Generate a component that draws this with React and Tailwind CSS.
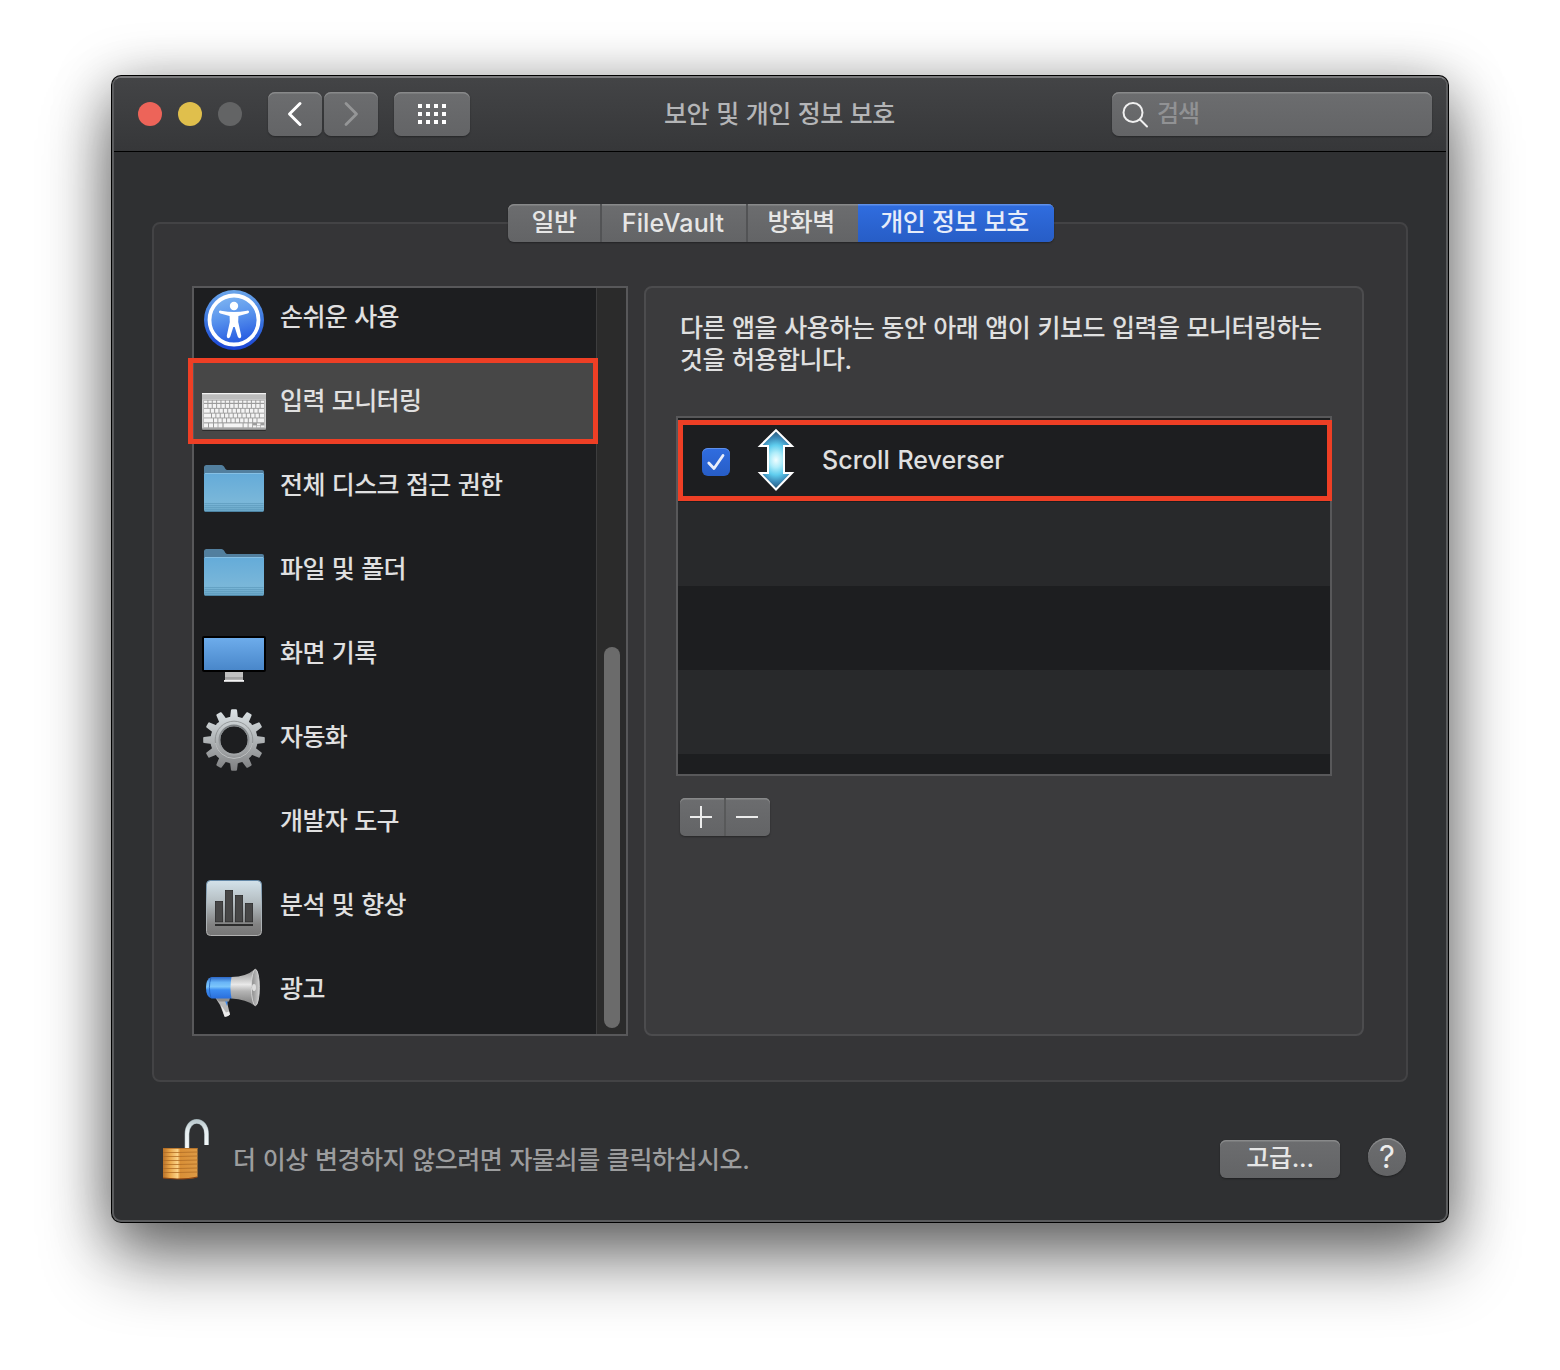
import React from "react";

const KO = "font-['Inter','Noto_Sans_CJK_KR',sans-serif] text-[25px] font-medium whitespace-nowrap [word-spacing:0.9px]";
const BTN = "bg-linear-to-b from-[#6c6d6f] to-[#636466] shadow-[inset_0_1.5px_0_#88898a,0_1px_2px_rgba(0,0,0,0.35)]";

function AccessibilityIcon() {
  return (
    <svg width="64" height="64" viewBox="0 0 64 64">
      <defs>
        <linearGradient id="acc" x1="0" y1="0" x2="0.25" y2="1">
          <stop offset="0" stopColor="#86bbf2" />
          <stop offset="0.5" stopColor="#5a95ed" />
          <stop offset="1" stopColor="#2a5fe2" />
        </linearGradient>
        <linearGradient id="accRim" x1="0" y1="0" x2="0" y2="1">
          <stop offset="0" stopColor="#6ba6ea" />
          <stop offset="0.5" stopColor="#3b76df" />
          <stop offset="1" stopColor="#1a44d4" />
        </linearGradient>
      </defs>
      <circle cx="32" cy="32" r="30" fill="url(#accRim)" />
      <circle cx="32" cy="32" r="24.5" fill="url(#acc)" stroke="#fff" strokeWidth="3.8" />
      <circle cx="32" cy="18" r="4.2" fill="#fff" />
      <path
        d="M17 23.2 Q16.6 25 18.4 25.4 L27.6 28 L27.8 34 L24.8 47.6 Q24.5 50 26 50.2 Q27.6 50.4 28.3 48.6 L31.3 39 H32.7 L35.7 48.6 Q36.4 50.4 38 50.2 Q39.5 50 39.2 47.6 L36.2 34 L36.4 28 L45.6 25.4 Q47.4 25 47 23.2 Q46.4 22.4 45 22.7 Q38 24 32 24 Q26 24 19 22.7 Q17.6 22.4 17 23.2Z"
        fill="#fff"
      />
    </svg>
  );
}

function KeyboardIcon() {
  const rows = [28.6, 32, 36.8, 41.6, 46.4, 51.4];
  return (
    <svg width="64" height="64" viewBox="0 0 64 64">
      <rect x="0" y="22" width="64" height="37" rx="1" fill="#2c2c2c" />
      <rect x="0" y="21" width="64" height="36.6" rx="1" fill="#d0d0d0" />
      <rect x="0" y="21" width="64" height="1.4" fill="#f2f2f2" />
      <rect x="0" y="22.4" width="64" height="5" fill="#bcbcbc" />
      <rect x="0" y="55.8" width="64" height="1.6" fill="#a4a4a4" />
      <rect x="1.6" y="28" width="60.8" height="27.8" fill="#9c9c9c" />
      {rows.map((y, r) => {
        const h = r === 0 ? 2.2 : 3.9;
        if (r === 5) {
          return (
            <g key={r} fill="#f4f4f4">
              <rect x="2" y={y} width="4" height={h} />
              <rect x="7" y={y} width="4" height={h} />
              <rect x="12" y={y} width="3.6" height={h} />
              <rect x="16.4" y={y} width="4" height={h} />
              <rect x="21.6" y={y} width="19" height={h} />
              <rect x="41.6" y={y} width="4" height={h} />
              <rect x="46.6" y={y} width="3.6" height={h} />
              <rect x="51" y={y + 2} width="3.4" height="2" />
              <rect x="55" y={y} width="3.4" height="1.8" />
              <rect x="55" y={y + 2.2} width="3.4" height="1.8" />
              <rect x="59" y={y + 2} width="3.4" height="2" />
            </g>
          );
        }
        const lead = [3.4, 3.4, 5.8, 7, 9][r];
        const count = [12, 12, 11, 11, 10][r];
        return (
          <g key={r} fill="#f4f4f4">
            <rect x="2" y={y} width={lead} height={h} />
            {Array.from({ length: count }).map((_, i) => (
              <rect key={i} x={2 + lead + 1 + i * 4.35} y={y} width="3.35" height={h} />
            ))}
            <rect
              x={2 + lead + 1 + count * 4.35}
              y={y}
              width={62 - (2 + lead + 1 + count * 4.35)}
              height={h}
            />
          </g>
        );
      })}
    </svg>
  );
}

function FolderIcon() {
  return (
    <svg width="64" height="64" viewBox="0 0 64 64">
      <defs>
        <linearGradient id="fold" x1="0" y1="0" x2="0" y2="1">
          <stop offset="0" stopColor="#64abd9" />
          <stop offset="0.75" stopColor="#7ab7d9" />
          <stop offset="1" stopColor="#69a6c6" />
        </linearGradient>
      </defs>
      <path d="M2 11.5 Q2 9 4.5 9 H19.5 Q21 9 22 10.5 L23.5 13 Q24.2 14 25.5 14 H60 Q62 14 62 16 V30 H2Z" fill="#527f9e" />
      <path d="M2 18.5 Q2 17 3.5 17 H60.5 Q62 17 62 18.5 V54 Q62 56 60 56 H4 Q2 56 2 54Z" fill="url(#fold)" />
      <rect x="3" y="17" width="58" height="0.8" fill="#8fc6e6" />
      <path d="M2.5 47.5H61.5M2.5 49.5H61.5M2.5 51.5H61.5M2.5 53.5H61.5" stroke="#5f9dbf" strokeWidth="0.8" />
      <path d="M3 55.5H61" stroke="#4c83a2" strokeWidth="1" />
    </svg>
  );
}

function MonitorIcon() {
  return (
    <svg width="64" height="64" viewBox="0 0 64 64">
      <defs>
        <linearGradient id="scr" x1="0" y1="0" x2="0" y2="1">
          <stop offset="0" stopColor="#6daceb" />
          <stop offset="1" stopColor="#4987ca" />
        </linearGradient>
      </defs>
      <rect x="23" y="47" width="18" height="9" fill="#c0c0c0" />
      <rect x="23" y="53" width="18" height="2.5" fill="#a2a2a2" />
      <rect x="22" y="56" width="20" height="1.8" fill="#f4f4f4" />
      <rect x="0" y="12" width="64" height="36" rx="2" fill="#000" />
      <rect x="2" y="14" width="60" height="32" fill="url(#scr)" />
    </svg>
  );
}

function GearIcon() {
  return (
    <svg width="64" height="64" viewBox="0 0 64 64">
      <defs>
        <linearGradient id="gear" gradientUnits="userSpaceOnUse" x1="0" y1="1" x2="0" y2="63">
          <stop offset="0" stopColor="#dce3e6" />
          <stop offset="0.5" stopColor="#b0b4b6" />
          <stop offset="1" stopColor="#7d7e80" />
        </linearGradient>
        <linearGradient id="gearRing" x1="0" y1="0" x2="0" y2="1">
          <stop offset="0" stopColor="#7c8184" />
          <stop offset="1" stopColor="#a3a6a8" />
        </linearGradient>
        <mask id="teeth">
          <rect width="64" height="64" fill="#000" />
          {Array.from({ length: 12 }).map((_, i) => (
            <path key={i} d="M27.8 12 L29 2 Q29.2 1.2 30 1.2 H34 Q34.8 1.2 35 2 L36.2 12Z" fill="#fff" transform={`rotate(${i * 30} 32 32)`} />
          ))}
          <circle cx="32" cy="32" r="23.6" fill="#fff" />
          <circle cx="32" cy="32" r="13.8" fill="#000" />
        </mask>
      </defs>
      <rect width="64" height="64" fill="url(#gear)" mask="url(#teeth)" />
      <circle cx="32" cy="32" r="18.8" fill="none" stroke="#888b8d" strokeWidth="0.8" />
      <circle cx="32" cy="32" r="14.6" fill="none" stroke="url(#gearRing)" strokeWidth="1.8" />
      <path d="M13.5 35 A18.8 18.8 0 0 0 50.5 35" fill="none" stroke="#c3c5c6" strokeWidth="0.9" />
    </svg>
  );
}

function ChartIcon() {
  return (
    <svg width="64" height="64" viewBox="0 0 64 64">
      <defs>
        <linearGradient id="chart" x1="0" y1="0" x2="0" y2="1">
          <stop offset="0" stopColor="#d3e2ea" />
          <stop offset="0.4" stopColor="#b4bdc1" />
          <stop offset="0.8" stopColor="#828282" />
          <stop offset="1" stopColor="#767676" />
        </linearGradient>
        <linearGradient id="chartEdge" x1="0" y1="0" x2="0" y2="1">
          <stop offset="0" stopColor="#6489a8" />
          <stop offset="0.4" stopColor="#a5b4bd" />
          <stop offset="1" stopColor="#b0b0b0" />
        </linearGradient>
      </defs>
      <rect x="4.5" y="4.5" width="55" height="55" rx="4" fill="url(#chart)" stroke="url(#chartEdge)" />
      <g fill="#474747" stroke="#2c2c2c" strokeWidth="0.8">
        <rect x="13.4" y="25.4" width="7.2" height="20.4" />
        <rect x="23.4" y="14.4" width="7.2" height="31.4" />
        <rect x="33.4" y="19.4" width="7.2" height="26.4" />
        <rect x="43.4" y="27.4" width="7.2" height="18.4" />
      </g>
      <rect x="13" y="48" width="38" height="2" fill="#2c2c2c" />
    </svg>
  );
}

function MegaphoneIcon() {
  return (
    <svg width="64" height="64" viewBox="0 0 64 64">
      <defs>
        <linearGradient id="mBlue" x1="0" y1="0" x2="0" y2="1">
          <stop offset="0" stopColor="#2c68c9" />
          <stop offset="0.25" stopColor="#69b5f7" />
          <stop offset="0.45" stopColor="#7cc6fb" />
          <stop offset="0.6" stopColor="#3c8df2" />
          <stop offset="1" stopColor="#2a6edb" />
        </linearGradient>
        <linearGradient id="mHorn" x1="0" y1="0" x2="0" y2="1">
          <stop offset="0" stopColor="#8a8a8a" />
          <stop offset="0.42" stopColor="#e9e9e9" />
          <stop offset="0.6" stopColor="#b4b4b4" />
          <stop offset="1" stopColor="#7a7a7a" />
        </linearGradient>
        <linearGradient id="mBell" x1="0" y1="0" x2="1" y2="0">
          <stop offset="0" stopColor="#8a8a8a" />
          <stop offset="1" stopColor="#cfcfcf" />
        </linearGradient>
      </defs>
      <path d="M13 37 L24 38 L28 54.5 Q26 57 22.5 56.6 L18 45Z" fill="#b9b9b9" />
      <path d="M19 45 L24 52.5 L27 51.5 L28 54.5 Q26 57 22.5 56.6Z" fill="#ececec" />
      <path d="M22 38.5 L26 38.5 L25 46Z" fill="#3c8df2" />
      <path d="M14 38 H28 L27 41.5 H17Z" fill="#8e8e8e" />
      <path d="M9.5 17 H30 V38.5 H9.5 Q4 37 4 28 Q4 18.5 9.5 17Z" fill="url(#mBlue)" />
      <path d="M9 17.5 Q5.8 27.5 9 38" fill="none" stroke="#1f5fb9" strokeWidth="0.8" />
      <path d="M29.5 17 Q44 17 53 9 V46 Q44 39 29.5 38.5 Q27.5 28 29.5 17Z" fill="url(#mHorn)" />
      <ellipse cx="53.4" cy="27.5" rx="4" ry="18.2" fill="url(#mBell)" stroke="#dedede" strokeWidth="0.8" />
      <ellipse cx="52" cy="27.5" rx="2" ry="3.4" fill="#dedede" />
    </svg>
  );
}

function ArrowIcon() {
  return (
    <svg width="38" height="64" viewBox="0 0 38 64">
      <defs>
        <radialGradient id="arrow" gradientUnits="userSpaceOnUse" cx="0" cy="0" r="30" gradientTransform="translate(19 32) scale(0.8 1)">
          <stop offset="0" stopColor="#f0fdff" />
          <stop offset="0.25" stopColor="#b0edfa" />
          <stop offset="0.5" stopColor="#5fcdee" />
          <stop offset="0.75" stopColor="#3a86b4" />
          <stop offset="1" stopColor="#2b4f69" />
        </radialGradient>
      </defs>
      <path d="M19 2.2 L35 18 H27 V45 H35 L19 61.5 L3 45 H11 V18 H3Z" fill="url(#arrow)" stroke="#fff" strokeWidth="2" />
    </svg>
  );
}

function LockIcon() {
  return (
    <svg width="50" height="64" viewBox="0 0 50 64" className="-mt-px">
      <defs>
        <linearGradient id="brass" x1="0" y1="0" x2="1" y2="0">
          <stop offset="0" stopColor="#b9722a" />
          <stop offset="0.2" stopColor="#e9a548" />
          <stop offset="0.42" stopColor="#fbd287" />
          <stop offset="0.5" stopColor="#d98f36" />
          <stop offset="1" stopColor="#dd9a45" />
        </linearGradient>
        <linearGradient id="steel" gradientUnits="userSpaceOnUse" x1="0" y1="2" x2="0" y2="32">
          <stop offset="0" stopColor="#b4c3c8" />
          <stop offset="0.4" stopColor="#e6eef0" />
          <stop offset="1" stopColor="#f6fafb" />
        </linearGradient>
      </defs>
      <path d="M27 32 V17 C27 0.2 46.5 0.2 46.5 17 V28" fill="none" stroke="#8b999e" strokeWidth="4.8" />
      <path d="M27 32 V17 C27 0.2 46.5 0.2 46.5 17 V28" fill="none" stroke="url(#steel)" strokeWidth="3.7" />
      <path d="M3 31 H37.5 V60 Q30 62.5 17 62 L3 61Z" fill="url(#brass)" />
      <path d="M3 31.5H37.5M3 35.5H18L37.5 35M3 39.5H18L37.5 39M3 43.5H18L37.5 43M3 47.5H18L37.5 47M3 51.5H18L37.5 51M3 55.5H18L37.5 55" fill="none" stroke="#b06c24" strokeWidth="0.8" />
      <path d="M3 61 L17 62 Q30 62 37.5 60" fill="none" stroke="#8a4412" strokeWidth="1.2" />
    </svg>
  );
}

const ITEMS = [
  { label: "손쉬운 사용", Icon: AccessibilityIcon },
  { label: "입력 모니터링", Icon: KeyboardIcon, selected: true },
  { label: "전체 디스크 접근 권한", Icon: FolderIcon },
  { label: "파일 및 폴더", Icon: FolderIcon },
  { label: "화면 기록", Icon: MonitorIcon },
  { label: "자동화", Icon: GearIcon },
  { label: "개발자 도구" },
  { label: "분석 및 향상", Icon: ChartIcon },
  { label: "광고", Icon: MegaphoneIcon },
];

function TitleBar() {
  return (
    <header className="flex h-[74px] shrink-0 items-start border-b border-black bg-linear-to-b from-[#434446] to-[#363739] pt-[14px] pr-[14px] pl-6">
      <div className="flex h-11 items-center gap-4">
        <span className="size-6 rounded-full bg-[#ed6459]" />
        <span className="size-6 rounded-full bg-[#e0bf4c]" />
        <span className="size-6 rounded-full bg-[#636465]" />
      </div>
      <div className="ml-[26px] flex gap-[2px]">
        <div className={`flex h-11 w-[54px] items-center justify-center rounded-[7px] ${BTN}`}>
          <svg width="16" height="26" viewBox="0 0 16 26" fill="none" stroke="#fff" strokeWidth="3" strokeLinecap="round" strokeLinejoin="round">
            <path d="M13 2.5 L2.5 13 L13 23.5" />
          </svg>
        </div>
        <div className={`flex h-11 w-[54px] items-center justify-center rounded-[7px] ${BTN}`}>
          <svg width="16" height="26" viewBox="0 0 16 26" fill="none" stroke="#959697" strokeWidth="2.8" strokeLinecap="round" strokeLinejoin="round">
            <path d="M3 2.5 L13.5 13 L3 23.5" />
          </svg>
        </div>
      </div>
      <div className={`ml-4 flex h-11 w-[76px] items-center justify-center rounded-[7px] ${BTN}`}>
        <div className="grid grid-cols-4 gap-1">
          {Array.from({ length: 12 }).map((_, i) => (
            <span key={i} className="size-1 bg-white" />
          ))}
        </div>
      </div>
      <div className={`flex h-11 flex-1 items-center justify-center pt-[2px] tracking-[-0.5px] text-[#b4b5b7] ${KO}`}>
        <span className="mr-[23px]">보안 및 개인 정보 보호</span>
      </div>
      <div className={`flex h-11 w-[320px] items-center rounded-[7px] pl-[10px] ${BTN}`}>
        <svg width="28" height="28" viewBox="0 0 28 28" fill="none" stroke="#f0f0f0" strokeWidth="2" strokeLinecap="round">
          <circle cx="11" cy="12.5" r="9.5" />
          <path d="M18 19.5 L25 26.5" />
        </svg>
        <span className="-mt-[5px] ml-[7px] font-['Noto_Sans_CJK_KR',sans-serif] text-[24px] font-medium tracking-[-1px] text-[#919294]">검색</span>
      </div>
    </header>
  );
}

function Tabs() {
  const cell = "flex h-[38px] items-center justify-center";
  return (
    <div className={`-mt-5 ml-[354px] flex h-[38px] w-[546px] overflow-hidden rounded-[6px] tracking-[-0.6px] text-[#e6e6e6] ${KO} ${BTN}`}>
      <div className={`${cell} w-[94px] border-r-2 border-[#525355]`}>일반</div>
      <div className={`${cell} w-[146px] border-r-2 border-[#525355] pt-[2px] pr-[2px] tracking-[0.1px]`}>FileVault</div>
      <div className={`${cell} w-[110px] pr-[4px]`}>방화벽</div>
      <div className={`${cell} w-[196px] bg-linear-to-b from-[#306de0] to-[#275dc6] pr-[3px] text-[#e6ecf9] shadow-[inset_0_1.5px_0_#5f90ea]`}>개인 정보 보호</div>
    </div>
  );
}

function Sidebar() {
  return (
    <div className="relative flex h-[750px] w-[436px] border-2 border-[#58585a] bg-[#1d1e20]">
      <div className="flex h-full w-[402px] flex-col justify-end overflow-hidden">
        {ITEMS.map(({ label, Icon, selected }) => (
          <div key={label} className={`flex h-[84px] shrink-0 items-center pl-2 ${selected ? "bg-[#474747]" : ""}`}>
            <div className="mt-1 size-16">{Icon && <Icon />}</div>
            <span className={`-mt-px ml-[14px] tracking-[-0.6px] text-[#e0e0e0] ${KO}`}>{label}</span>
          </div>
        ))}
        <div className="h-[2px] shrink-0" />
      </div>
      <div className="flex w-[30px] items-end justify-center border-l border-[#3d3d3e] bg-[#2b2b2b] pb-[6px]">
        <div className="h-[381px] w-4 rounded-full bg-[#6b6b6b]" />
      </div>
      <div className="absolute top-[70px] -left-[6px] h-[86px] w-[410px] border-5 border-[#ee3f25]" />
    </div>
  );
}

function Detail() {
  return (
    <div className="ml-4 flex h-[750px] w-[720px] flex-col rounded-[8px] border-2 border-[#4c4c4e] bg-[#3b3b3d] pt-[24px] pl-[30px]">
      <p className={`ml-1 leading-[32px] tracking-[-0.5px] text-[#e0e0e0] ${KO}`}>
        다른 앱을 사용하는 동안 아래 앱이 키보드 입력을 모니터링하는
        <br />
        것을 허용합니다.
      </p>
      <div className="relative mt-10 flex h-[360px] w-[656px] shrink-0 flex-col border-2 border-[#58585a] bg-[#1d1e20]">
        <div className="flex h-[84px] items-center pl-6">
          <div className="mt-[4px] flex size-7 items-center justify-center rounded-[6px] bg-linear-to-b from-[#306de0] to-[#275dc6] shadow-[inset_0_1px_0_#5f90ea]">
            <svg width="20" height="20" viewBox="0 0 20 20" fill="none" stroke="#e9eefa" strokeWidth="2.8" strokeLinecap="round" strokeLinejoin="round">
              <path d="M2.8 11 L8 16.5 L17 3.5" />
            </svg>
          </div>
          <div className="ml-[27px]">
            <ArrowIcon />
          </div>
          <span className={`mt-[2px] ml-[27px] tracking-[0.05px] text-[#e0e0e0] ${KO}`}>Scroll Reverser</span>
        </div>
        <div className="h-[84px] bg-[#28292b]" />
        <div className="h-[84px]" />
        <div className="h-[84px] bg-[#28292b]" />
        <div className="absolute top-[2px] left-0 h-[81px] w-[654px] border-5 border-[#ee3f25]" />
      </div>
      <div className={`mt-[22px] ml-1 flex h-[38px] w-[90px] rounded-[5px] ${BTN}`}>
        <div className="flex w-[46px] items-center justify-center border-r-2 border-[#58595a]">
          <svg width="22" height="22" viewBox="0 0 22 22" stroke="#ececec" strokeWidth="2" className="-ml-[2px]">
            <path d="M0 11H22M11 0V22" />
          </svg>
        </div>
        <div className="flex w-[44px] items-center justify-center pr-[2px]">
          <svg width="22" height="22" viewBox="0 0 22 22" stroke="#ececec" strokeWidth="2">
            <path d="M0 11H22" />
          </svg>
        </div>
      </div>
    </div>
  );
}

export default function App() {
  return (
    <div className="h-[1370px] w-[1560px] overflow-hidden bg-white pt-[76px] pl-[112px]">
      <div className="flex h-[1146px] w-[1336px] flex-col overflow-hidden rounded-[9px] border-2 border-[#5b5c5e] border-t-[#7b7b7d] bg-[#2f3032] shadow-[0_0_0_1px_#000,0_8px_56px_rgba(0,0,0,0.36),0_38px_70px_rgba(0,0,0,0.48)]">
        <TitleBar />
        <main className="mt-[70px] ml-[38px] h-[860px] w-[1256px] shrink-0 rounded-[8px] border-2 border-[#434345] bg-[#353537]">
          <Tabs />
          <div className="mt-11 ml-[38px] flex">
            <Sidebar />
            <Detail />
          </div>
        </main>
        <footer className="mt-[36px] flex items-start pl-[46px]">
          <LockIcon />
          <span className={`mt-6 ml-[23px] tracking-[-0.45px] text-[#9c9d9e] ${KO}`}>더 이상 변경하지 않으려면 자물쇠를 클릭하십시오.</span>
          <div className={`mt-[22px] mr-7 ml-auto flex h-[38px] w-[120px] items-center justify-center rounded-[6px] tracking-[-0.2px] text-[#e6e6e6] ${KO} ${BTN}`}>고급...</div>
          <div className={`mt-5 mr-10 flex size-[38px] items-center justify-center rounded-full font-['Inter',sans-serif] text-[31px] text-[#ececec] ${BTN}`}>?</div>
        </footer>
      </div>
    </div>
  );
}
